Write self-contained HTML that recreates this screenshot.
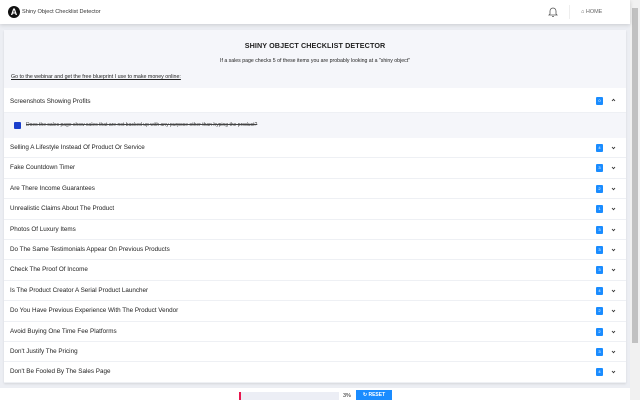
<!DOCTYPE html><html><head><style>
*{box-sizing:border-box;margin:0;padding:0}
body{width:640px;height:400px;overflow:hidden;background:#eceef3;font-family:"Liberation Sans",sans-serif;color:#222;position:relative}
.hdr{position:absolute;left:0;top:0;width:630px;height:24px;background:#fff;box-shadow:0 1px 4px rgba(0,0,0,.15);z-index:2}
.logo{position:absolute;left:8px;top:6px;width:12px;height:12px;border-radius:50%;background:#111;color:#fff;font-size:9px;font-weight:bold;text-align:center;line-height:12px}
.title{position:absolute;left:22px;top:9px;font-size:5.6px;line-height:7px;color:#333}
.sb{position:absolute;right:0;top:0;width:10px;height:400px;background:#f1f1f1}
.sb div{position:absolute;left:2px;top:8px;width:6px;height:335px;background:#c1c1c1}
.card{position:absolute;left:4px;top:30px;width:622px;height:353px;background:#fff;box-shadow:0 1px 2px rgba(0,0,0,.1)}
.top{height:58px;background:#f5f6fa;text-align:center;position:relative}
h1{font-size:7.2px;line-height:8px;font-weight:bold;padding-top:12px;letter-spacing:.1px}
.sub{font-size:5.2px;margin-top:8px;line-height:6px}
.lnk{position:absolute;left:7px;top:44px;font-size:5.3px;line-height:6px;text-decoration:underline}
.row{height:20.4px;border-bottom:1px solid #eef0f4;position:relative;font-size:6.3px;line-height:20px;padding-left:6px}
.bd{position:absolute;left:592px;top:6px;width:7px;height:8px;background:#1a8cff;border-radius:1px;color:#fff;font-size:4px;line-height:8px;text-align:center}
.cv{position:absolute;left:607px;top:8px}
.exp{height:25px;background:#f5f6fa;position:relative;font-size:5px;line-height:25px;padding-left:22px;text-decoration:line-through;color:#444}
.cb{position:absolute;left:10px;top:9px;width:7px;height:7px;background:#1a3fcc;border-radius:1px}
.bot{position:absolute;left:0;top:388px;width:630px;height:12px;background:#fff}
</style></head><body>
<div class="hdr"><div class="logo">A</div><div class="title">Shiny Object Checklist Detector</div>
<svg style="position:absolute;left:548px;top:6px" width="10" height="12" viewBox="0 0 10 12"><path d="M2 8V5a3 3 0 0 1 6 0v3l1 1H1z M4 10.5h2" fill="none" stroke="#555" stroke-width=".8"/></svg>
<div style="position:absolute;left:569px;top:5px;width:1px;height:14px;background:#eee"></div>
<div style="position:absolute;left:581px;top:9px;font-size:5.5px;line-height:6px;color:#666">&#8962; HOME</div></div>
<div class="card"><div class="top"><h1>SHINY OBJECT CHECKLIST DETECTOR</h1><div class="sub">If a sales page checks 5 of these items you are probably looking at a "shiny object"</div><div class="lnk">Go to the webinar and get the free blueprint I use to make money online:</div></div>
<div class="row" style="height:23px;margin-top:2px;line-height:23px">Screenshots Showing Profits<span class="bd" style="top:7px">0</span><svg class="cv" width="5" height="4" viewBox="0 0 5 4"><path d="M1 3L2.5 1.3L4 3" fill="none" stroke="#333" stroke-width=".9"/></svg></div>
<div class="exp"><span class="cb"></span>Does the sales page show sales that are not backed up with any purpose other than hyping the product?</div>
<div class="row">Selling A Lifestyle Instead Of Product Or Service<span class="bd">4</span><svg class="cv" width="5" height="4" viewBox="0 0 5 4"><path d="M1 1L2.5 2.7L4 1" fill="none" stroke="#333" stroke-width=".9"/></svg></div>
<div class="row">Fake Countdown Timer<span class="bd">3</span><svg class="cv" width="5" height="4" viewBox="0 0 5 4"><path d="M1 1L2.5 2.7L4 1" fill="none" stroke="#333" stroke-width=".9"/></svg></div>
<div class="row">Are There Income Guarantees<span class="bd">2</span><svg class="cv" width="5" height="4" viewBox="0 0 5 4"><path d="M1 1L2.5 2.7L4 1" fill="none" stroke="#333" stroke-width=".9"/></svg></div>
<div class="row">Unrealistic Claims About The Product<span class="bd">1</span><svg class="cv" width="5" height="4" viewBox="0 0 5 4"><path d="M1 1L2.5 2.7L4 1" fill="none" stroke="#333" stroke-width=".9"/></svg></div>
<div class="row">Photos Of Luxury Items<span class="bd">3</span><svg class="cv" width="5" height="4" viewBox="0 0 5 4"><path d="M1 1L2.5 2.7L4 1" fill="none" stroke="#333" stroke-width=".9"/></svg></div>
<div class="row">Do The Same Testimonials Appear On Previous Products<span class="bd">3</span><svg class="cv" width="5" height="4" viewBox="0 0 5 4"><path d="M1 1L2.5 2.7L4 1" fill="none" stroke="#333" stroke-width=".9"/></svg></div>
<div class="row">Check The Proof Of Income<span class="bd">3</span><svg class="cv" width="5" height="4" viewBox="0 0 5 4"><path d="M1 1L2.5 2.7L4 1" fill="none" stroke="#333" stroke-width=".9"/></svg></div>
<div class="row">Is The Product Creator A Serial Product Launcher<span class="bd">4</span><svg class="cv" width="5" height="4" viewBox="0 0 5 4"><path d="M1 1L2.5 2.7L4 1" fill="none" stroke="#333" stroke-width=".9"/></svg></div>
<div class="row">Do You Have Previous Experience With The Product Vendor<span class="bd">2</span><svg class="cv" width="5" height="4" viewBox="0 0 5 4"><path d="M1 1L2.5 2.7L4 1" fill="none" stroke="#333" stroke-width=".9"/></svg></div>
<div class="row">Avoid Buying One Time Fee Platforms<span class="bd">2</span><svg class="cv" width="5" height="4" viewBox="0 0 5 4"><path d="M1 1L2.5 2.7L4 1" fill="none" stroke="#333" stroke-width=".9"/></svg></div>
<div class="row">Don't Justify The Pricing<span class="bd">3</span><svg class="cv" width="5" height="4" viewBox="0 0 5 4"><path d="M1 1L2.5 2.7L4 1" fill="none" stroke="#333" stroke-width=".9"/></svg></div>
<div class="row">Don't Be Fooled By The Sales Page<span class="bd">4</span><svg class="cv" width="5" height="4" viewBox="0 0 5 4"><path d="M1 1L2.5 2.7L4 1" fill="none" stroke="#333" stroke-width=".9"/></svg></div>
</div>
<div class="bot"><div style="position:absolute;left:239px;top:4px;width:100px;height:8px;background:#eceef5"></div><div style="position:absolute;left:239px;top:4px;width:2px;height:8px;background:#e8174f"></div>
<div style="position:absolute;left:343px;top:5px;font-size:5.5px;line-height:6px">3%</div>
<div style="position:absolute;left:356px;top:2px;width:36px;height:10px;background:#1a8cff;color:#fff;font-size:5px;font-weight:bold;line-height:10px;text-align:center">&#8635; RESET</div></div>
<div class="sb"><div></div></div>
</body></html>
